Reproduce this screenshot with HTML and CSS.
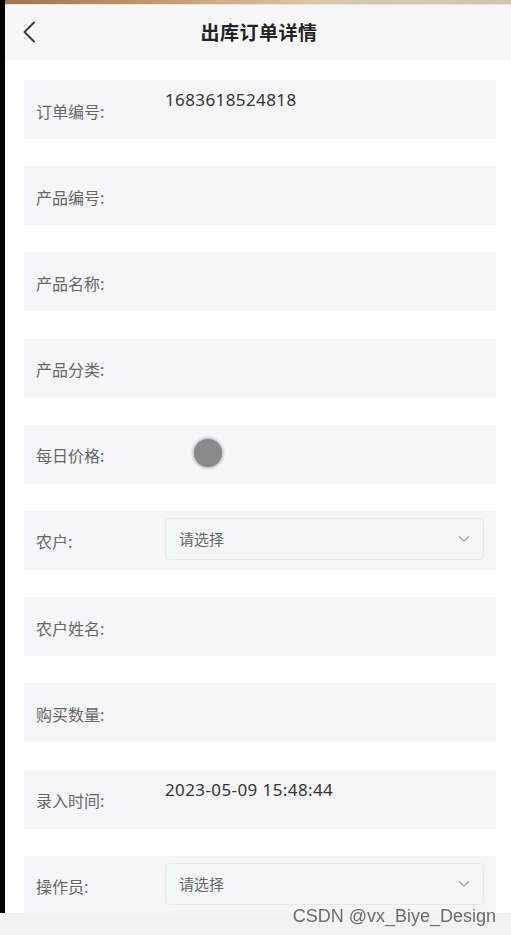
FILE: index.html
```html
<!DOCTYPE html>
<html lang="zh-CN">
<head>
    <meta charset="UTF-8">
    <meta name="viewport" content="width=device-width, initial-scale=1.0">
    <title>出库订单详情</title>
    <link rel="stylesheet" href="styles.css">
</head>
<body>
    <div class="screen">
        <div class="edge"></div>
        <div class="app">
            <div class="top-strip"></div>
            <div class="nav-bar">
                <svg class="back" width="14" height="22" viewBox="0 0 14 22">
                    <path d="M12 1.5 L2.5 11 L12 20.5" fill="none" stroke="#333" stroke-width="1.8" stroke-linecap="round" stroke-linejoin="round"/>
                </svg>
                <div class="nav-title">出库订单详情</div>
            </div>

            <div class="form">
                <div class="row">
                    <div class="label">订单编号:</div>
                    <div class="value">1683618524818</div>
                </div>
                <div class="row">
                    <div class="label">产品编号:</div>
                </div>
                <div class="row">
                    <div class="label">产品名称:</div>
                </div>
                <div class="row">
                    <div class="label">产品分类:</div>
                </div>
                <div class="row">
                    <div class="label">每日价格:</div>
                    <div class="dot"></div>
                </div>
                <div class="row">
                    <div class="label">农户:</div>
                    <div class="select">
                        <span>请选择</span>
                        <svg width="12" height="8" viewBox="0 0 12 8">
                            <path d="M1 1.5 L6 6 L11 1.5" fill="none" stroke="#999" stroke-width="1.2"/>
                        </svg>
                    </div>
                </div>
                <div class="row">
                    <div class="label">农户姓名:</div>
                </div>
                <div class="row">
                    <div class="label">购买数量:</div>
                </div>
                <div class="row">
                    <div class="label">录入时间:</div>
                    <div class="value">2023-05-09 15:48:44</div>
                </div>
                <div class="row">
                    <div class="label">操作员:</div>
                    <div class="select">
                        <span>请选择</span>
                        <svg width="12" height="8" viewBox="0 0 12 8">
                            <path d="M1 1.5 L6 6 L11 1.5" fill="none" stroke="#999" stroke-width="1.2"/>
                        </svg>
                    </div>
                </div>
            </div>
        </div>
    </div>

    <div class="bottom-bar"></div>
    <div class="watermark">CSDN @vx_Biye_Design</div>
</body>
</html>
```

FILE: styles.css
```css
body {
    margin: 0;
    font-family: "Noto Sans CJK SC", "Noto Sans", sans-serif;
    background-color: #fff;
    overflow: hidden;
}
.screen {
    display: flex;
    min-height: 935px;
}
.edge {
    width: 5px;
    background-color: #000;
    flex-shrink: 0;
}
.app {
    flex: 1;
    background-color: #fff;
}
.top-strip {
    height: 4px;
    background: linear-gradient(90deg, #9c7450, #c49a6e 30%, #d8c8a8 60%, #cfc6b4);
    border-bottom: 1px solid #e2e2e2;
}
.nav-bar {
    height: 55px;
    background-color: #f7f7f7;
    display: flex;
    align-items: center;
    justify-content: center;
    position: relative;
}
.back {
    position: absolute;
    left: 17px;
    top: 16px;
}
.nav-title {
    font-size: 19px;
    font-weight: bold;
    color: #222;
    margin-left: 2px;
    margin-top: -2px;
    letter-spacing: 0.5px;
}
.form {
    padding: 20px 15px 0 19px;
    display: flex;
    flex-direction: column;
    gap: 27.2px;
}
.row {
    height: 59px;
    background-color: #f6f6fa;
    display: flex;
    align-items: center;
    padding: 0 12px;
}
.label {
    width: 129px;
    flex-shrink: 0;
    font-size: 16px;
    color: #666;
    margin-top: 2px;
}
.value {
    align-self: flex-start;
    margin-top: 8px;
    font-family: "Noto Sans", "Noto Sans CJK SC", sans-serif;
    font-size: 17px;
    letter-spacing: 0.4px;
    color: #333;
}
.dot {
    width: 28px;
    height: 28px;
    margin-left: 29px;
    margin-top: -2px;
    border-radius: 50%;
    background-color: #8a8a8a;
    box-shadow: 0 0 3px 1px rgba(138, 138, 138, 0.7);
}
.select {
    flex: 1;
    height: 42px;
    margin-top: -3px;
    box-sizing: border-box;
    border: 1px solid #e7e8ee;
    border-radius: 4px;
    background-color: #f5f6fa;
    display: flex;
    align-items: center;
    justify-content: space-between;
    padding: 0 13px;
    font-size: 15px;
    color: #666;
}
.bottom-bar {
    position: fixed;
    left: 0;
    right: 0;
    bottom: 0;
    height: 22px;
    background-color: #f2f2f2;
}
.watermark {
    position: fixed;
    right: 15px;
    bottom: 8px;
    font-family: "Liberation Sans", Arial, sans-serif;
    font-size: 18px;
    color: #6c6c6c;
}
```
